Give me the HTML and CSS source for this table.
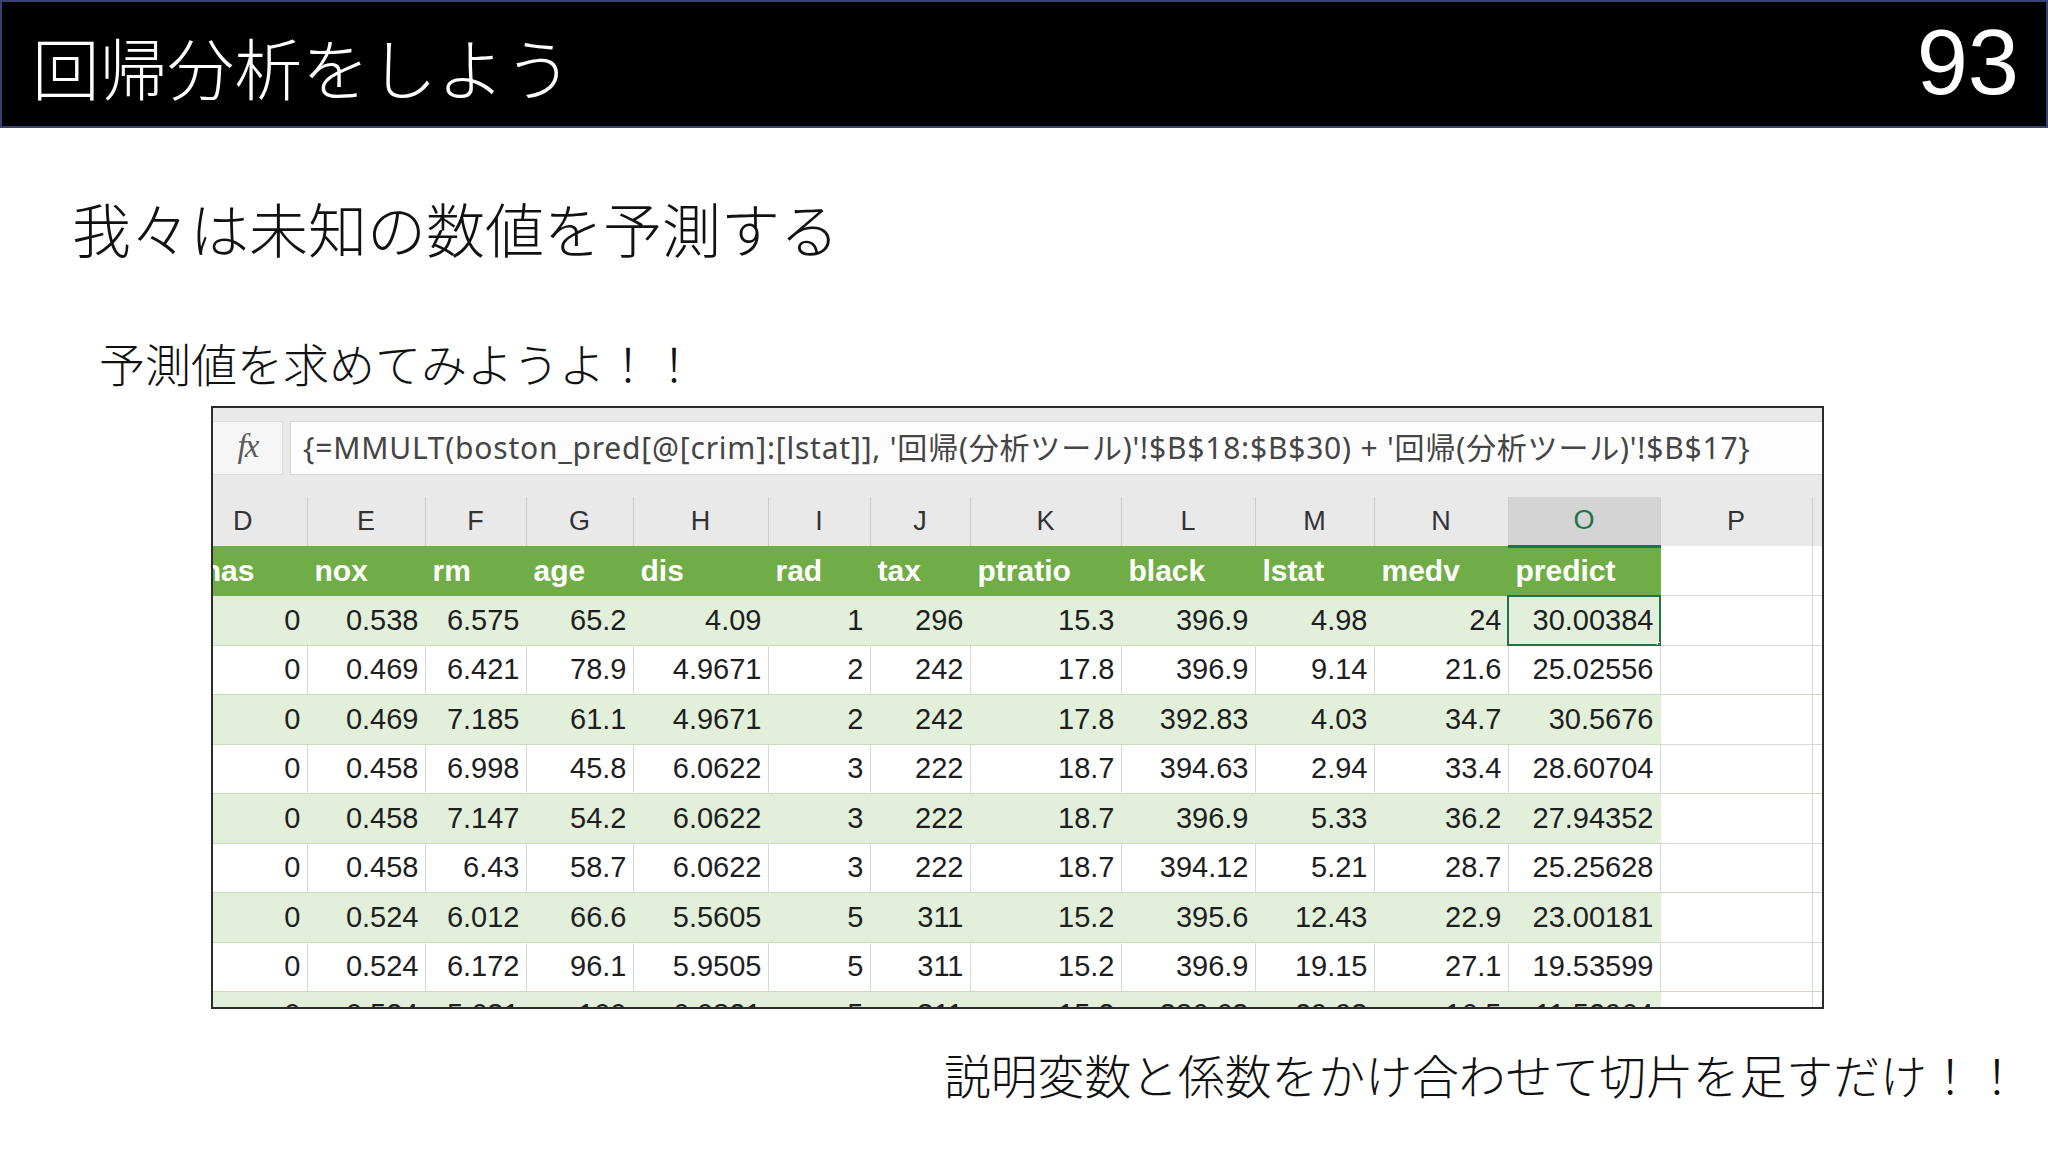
FILE: index.html
```html
<!DOCTYPE html>
<html lang="ja">
<head>
<meta charset="utf-8">
<title>回帰分析をしよう</title>
<link rel="stylesheet" href="styles.css">
</head>
<body>
<header class="topbar">
  <h1 class="title">回帰分析をしよう</h1>
  <div class="page-no">93</div>
</header>

<p class="lead">我々は未知の数値を予測する</p>
<p class="sub">予測値を求めてみようよ！！</p>

<div class="sheet">
  <div class="formula-bar">
    <div class="fx">fx</div>
    <div class="formula">{=MMULT(boston_pred[@[crim]:[lstat]], '回帰(分析ツール)'!$B$18:$B$30) + '回帰(分析ツール)'!$B$17}</div>
  </div>
  <table class="grid">
    <colgroup>
      <col class="c-d"><col class="c-e"><col class="c-f"><col class="c-g"><col class="c-h"><col class="c-i"><col class="c-j"><col class="c-k"><col class="c-l"><col class="c-m"><col class="c-n"><col class="c-o"><col class="c-p"><col class="c-q">
    </colgroup>
    <thead>
      <tr class="letters">
        <th>D</th><th>E</th><th>F</th><th>G</th><th>H</th><th>I</th><th>J</th><th>K</th><th>L</th><th>M</th><th>N</th><th class="sel">O</th><th>P</th><th></th>
      </tr>
    </thead>
    <tbody>
      <tr class="hdr">
        <td>chas</td><td>nox</td><td>rm</td><td>age</td><td>dis</td><td>rad</td><td>tax</td><td>ptratio</td><td>black</td><td>lstat</td><td>medv</td><td>predict</td><td class="out"></td><td class="out"></td>
      </tr>
      <tr class="band">
        <td>0</td><td>0.538</td><td>6.575</td><td>65.2</td><td>4.09</td><td>1</td><td>296</td><td>15.3</td><td>396.9</td><td>4.98</td><td>24</td><td class="active">30.00384</td><td class="out"></td><td class="out"></td>
      </tr>
      <tr>
        <td>0</td><td>0.469</td><td>6.421</td><td>78.9</td><td>4.9671</td><td>2</td><td>242</td><td>17.8</td><td>396.9</td><td>9.14</td><td>21.6</td><td>25.02556</td><td class="out"></td><td class="out"></td>
      </tr>
      <tr class="band">
        <td>0</td><td>0.469</td><td>7.185</td><td>61.1</td><td>4.9671</td><td>2</td><td>242</td><td>17.8</td><td>392.83</td><td>4.03</td><td>34.7</td><td>30.5676</td><td class="out"></td><td class="out"></td>
      </tr>
      <tr>
        <td>0</td><td>0.458</td><td>6.998</td><td>45.8</td><td>6.0622</td><td>3</td><td>222</td><td>18.7</td><td>394.63</td><td>2.94</td><td>33.4</td><td>28.60704</td><td class="out"></td><td class="out"></td>
      </tr>
      <tr class="band">
        <td>0</td><td>0.458</td><td>7.147</td><td>54.2</td><td>6.0622</td><td>3</td><td>222</td><td>18.7</td><td>396.9</td><td>5.33</td><td>36.2</td><td>27.94352</td><td class="out"></td><td class="out"></td>
      </tr>
      <tr>
        <td>0</td><td>0.458</td><td>6.43</td><td>58.7</td><td>6.0622</td><td>3</td><td>222</td><td>18.7</td><td>394.12</td><td>5.21</td><td>28.7</td><td>25.25628</td><td class="out"></td><td class="out"></td>
      </tr>
      <tr class="band">
        <td>0</td><td>0.524</td><td>6.012</td><td>66.6</td><td>5.5605</td><td>5</td><td>311</td><td>15.2</td><td>395.6</td><td>12.43</td><td>22.9</td><td>23.00181</td><td class="out"></td><td class="out"></td>
      </tr>
      <tr>
        <td>0</td><td>0.524</td><td>6.172</td><td>96.1</td><td>5.9505</td><td>5</td><td>311</td><td>15.2</td><td>396.9</td><td>19.15</td><td>27.1</td><td>19.53599</td><td class="out"></td><td class="out"></td>
      </tr>
      <tr class="band cut">
        <td>0</td><td>0.524</td><td>5.631</td><td>100</td><td>6.0821</td><td>5</td><td>311</td><td>15.2</td><td>386.63</td><td>29.93</td><td>16.5</td><td>11.52964</td><td class="out"></td><td class="out"></td>
      </tr>
    </tbody>
  </table>
</div>

<p class="note">説明変数と係数をかけ合わせて切片を足すだけ！！</p>
</body>
</html>
```

FILE: styles.css
```css
html, body {
  margin: 0;
  padding: 0;
  background: #ffffff;
}

body {
  width: 2048px;
  height: 1152px;
  overflow: hidden;
  font-family: "Noto Sans CJK JP", "Noto Sans", sans-serif;
  color: #000;
}

.topbar {
  box-sizing: border-box;
  height: 128px;
  background: #000;
  border: 2px solid #36426f;
  display: flex;
  align-items: center;
  justify-content: space-between;
  padding: 4px 27px 0 30px;
}

.title {
  margin: 0;
  font-family: "Noto Sans CJK JP", sans-serif;
  font-weight: 300;
  font-size: 67.5px;
  line-height: 1;
  color: #fff;
}

.page-no {
  font-family: "Liberation Sans", Arial, sans-serif;
  font-size: 92px;
  line-height: 1;
  color: #fff;
  margin-top: -8px;
}

.lead {
  margin: 70px 0 0 72px;
  font-weight: 300;
  font-size: 59px;
  line-height: 1;
  color: #111;
}

.sub {
  margin: 82px 0 0 99px;
  font-weight: 300;
  font-size: 46px;
  line-height: 1;
  color: #111;
}

.sheet {
  box-sizing: border-box;
  margin: 21px 0 0 211px;
  width: 1613px;
  height: 603px;
  border: 2px solid #2b2b2b;
  overflow: hidden;
  background: #e9e9ea;
}

.formula-bar {
  display: flex;
  gap: 7px;
  padding-top: 13px;
  height: 89px;
  box-sizing: border-box;
}

.fx {
  box-sizing: border-box;
  width: 70px;
  height: 54px;
  background: #f6f6f6;
  border: 1px solid #dcdcdc;
  border-left: none;
  font-family: "Liberation Serif", serif;
  font-style: italic;
  font-size: 33px;
  color: #5a5a5a;
  display: flex;
  align-items: center;
  justify-content: center;
  letter-spacing: -2px;
  padding-bottom: 3px;
}

.formula {
  box-sizing: border-box;
  flex: 1;
  height: 54px;
  background: #fdfdfd;
  border: 1px solid #d6d6d6;
  border-right: none;
  padding: 0 0 4px 12px;
  font-family: "Noto Sans", "Noto Sans CJK JP", sans-serif;
  font-size: 30px;
  letter-spacing: 0.8px;
  color: #454545;
  white-space: nowrap;
  display: flex;
  align-items: center;
}

.grid {
  border-collapse: collapse;
  table-layout: fixed;
  margin-left: -34px;
  width: 1733px;
  font-family: "Liberation Sans", Arial, sans-serif;
}

.c-d { width: 128px; }
.c-e { width: 118px; }
.c-f { width: 101px; }
.c-g { width: 107px; }
.c-h { width: 135px; }
.c-i { width: 102px; }
.c-j { width: 100px; }
.c-k { width: 151px; }
.c-l { width: 134px; }
.c-m { width: 119px; }
.c-n { width: 134px; }
.c-o { width: 152px; }
.c-p { width: 152px; }
.c-q { width: 100px; }

.letters th {
  height: 49px;
  padding: 0;
  font-weight: normal;
  font-size: 27px;
  color: #333;
  background: #e9e9ea;
  border-right: 1px solid #cdcdcd;
  text-align: center;
  vertical-align: middle;
  box-sizing: border-box;
}

.letters th.sel {
  background: #d4d4d4;
  color: #217346;
  border-bottom: 3px solid #217346;
}

tbody td {
  height: 49.5px;
  box-sizing: border-box;
  padding: 0 6px 0 7px;
  font-size: 29px;
  color: #1e1e1e;
  text-align: right;
  vertical-align: middle;
  white-space: nowrap;
  overflow: hidden;
  background: #fff;
  border-right: 1px solid #d9d9d9;
  border-bottom: 1px solid #d9d9d9;
}

tbody tr.band td {
  background: #e2efda;
  border-right-color: #e2efda;
  border-bottom-color: #c7dfb9;
}

tbody tr:not(.band):not(.hdr) td {
  border-bottom-color: #c7dfb9;
}

tbody tr.cut td {
  vertical-align: top;
  padding-top: 6px;
}

tr.hdr td {
  background: #70ad47;
  color: #fff;
  font-weight: bold;
  font-size: 30px;
  text-align: left;
  border-right-color: #70ad47;
  border-bottom-color: #70ad47;
}

tbody tr td.out,
tbody tr.band td.out,
tr.hdr td.out {
  background: #fff;
  border-right-color: #d9d9d9;
  border-bottom-color: #d9d9d9;
}

td.active {
  position: relative;
  outline: 2px solid #217346;
  outline-offset: -1px;
}

td.active::after {
  content: "";
  position: absolute;
  right: -4px;
  bottom: -4px;
  width: 7px;
  height: 7px;
  background: #217346;
  border: 1px solid #fff;
  box-sizing: border-box;
}

.note {
  margin: 42px 0 0 944px;
  font-weight: 300;
  font-size: 46.8px;
  line-height: 1;
  color: #111;
  white-space: nowrap;
}
```
